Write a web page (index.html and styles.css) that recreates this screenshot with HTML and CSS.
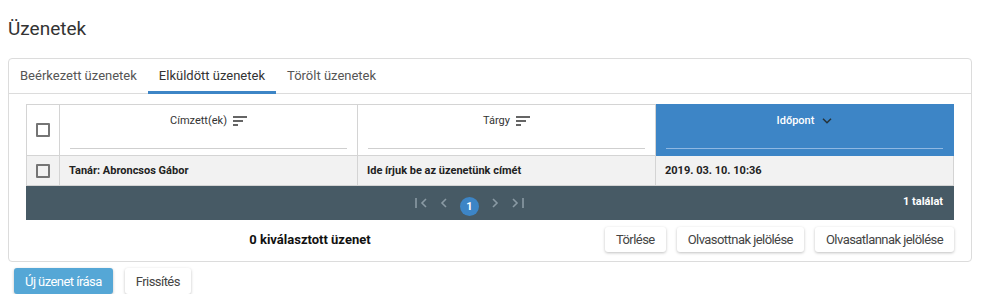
FILE: index.html
```html
<!DOCTYPE html>
<html lang="hu">
<head>
    <meta charset="UTF-8">
    <meta name="viewport" content="width=device-width, initial-scale=1.0">
    <title>Üzenetek</title>
    <link rel="stylesheet" href="styles.css">
</head>
<body>

<h1 class="page-title">Üzenetek</h1>

<div class="card">
    <div class="tabs">
        <div class="tab">Beérkezett üzenetek</div>
        <div class="tab active">Elküldött üzenetek</div>
        <div class="tab">Törölt üzenetek</div>
    </div>

    <div class="card-body">
        <table class="grid">
            <colgroup>
                <col class="col-check">
                <col>
                <col>
                <col>
            </colgroup>
            <thead>
                <tr>
                    <th class="check-cell"><span class="checkbox"></span></th>
                    <th>
                        <div class="col-title">Címzett(ek)
                            <svg class="sort-icon" width="14" height="10" viewBox="0 0 14 10"><path d="M0 1h14M0 5h10M0 9h5" stroke="#333" stroke-width="1.3" fill="none"/></svg>
                        </div>
                        <div class="filter"></div>
                    </th>
                    <th>
                        <div class="col-title">Tárgy
                            <svg class="sort-icon" width="14" height="10" viewBox="0 0 14 10"><path d="M0 1h14M0 5h10M0 9h5" stroke="#333" stroke-width="1.3" fill="none"/></svg>
                        </div>
                        <div class="filter"></div>
                    </th>
                    <th class="sorted">
                        <div class="col-title">Időpont
                            <svg class="sort-arrow" width="10" height="6" viewBox="0 0 10 6"><path d="M1 0.8l4 4 4-4" stroke="#263238" stroke-width="1.5" fill="none"/></svg>
                        </div>
                        <div class="filter"></div>
                    </th>
                </tr>
            </thead>
            <tbody>
                <tr>
                    <td class="check-cell"><span class="checkbox"></span></td>
                    <td>Tanár: Abroncsos Gábor</td>
                    <td>Ide írjuk be az üzenetünk címét</td>
                    <td>2019. 03. 10. 10:36</td>
                </tr>
            </tbody>
        </table>

        <div class="pager">
            <div class="pager-nav">
                <svg width="12" height="10" viewBox="0 0 12 10"><path d="M1 0v10M11 1L7 5l4 4" stroke="#8a9aa4" stroke-width="1.6" fill="none"/></svg>
                <svg width="7" height="10" viewBox="0 0 7 10"><path d="M6 1L2 5l4 4" stroke="#8a9aa4" stroke-width="1.6" fill="none"/></svg>
                <span class="page-current">1</span>
                <svg width="7" height="10" viewBox="0 0 7 10"><path d="M1 1l4 4-4 4" stroke="#8a9aa4" stroke-width="1.6" fill="none"/></svg>
                <svg width="12" height="10" viewBox="0 0 12 10"><path d="M1 1l4 4-4 4M11 0v10" stroke="#8a9aa4" stroke-width="1.6" fill="none"/></svg>
            </div>
            <div class="pager-count">1 találat</div>
        </div>

        <div class="actions">
            <div class="selected-count">0 kiválasztott üzenet</div>
            <button class="btn">Törlése</button>
            <button class="btn">Olvasottnak jelölése</button>
            <button class="btn">Olvasatlannak jelölése</button>
        </div>
    </div>
</div>

<div class="footer-buttons">
    <button class="btn btn-primary">Új üzenet írása</button>
    <button class="btn">Frissítés</button>
</div>

</body>
</html>
```

FILE: styles.css
```css
body {
    margin: 0;
    padding: 0 8px;
    font-family: Roboto, "Noto Sans", Arial, sans-serif;
    color: #333;
    background-color: #fff;
}
.page-title {
    margin: 17px 0;
    font-size: 19px;
    line-height: 24px;
    font-weight: 400;
    color: #333;
}
.card {
    border: 1px solid #dcdcdc;
    border-radius: 4px;
    margin-right: 2px;
}
.tabs {
    display: flex;
    border-bottom: 1px solid #dcdcdc;
}
.tab {
    height: 30px;
    line-height: 30px;
    padding: 2px 11px 0;
    margin-bottom: -1px;
    border-bottom: 3px solid transparent;
    font-size: 13px;
    color: #555;
}
.tab.active {
    color: #333;
    border-bottom-color: #3d85c6;
}
.card-body {
    padding: 10px 17px 9px;
}
.grid {
    width: 100%;
    border-collapse: collapse;
    table-layout: fixed;
    font-size: 11px;
}
.col-check {
    width: 33px;
}
.grid th,
.grid td {
    border: 1px solid #d4d4d4;
}
.grid th {
    padding: 9px 10px 6px;
    font-weight: 400;
    color: #333;
}
.grid th.check-cell,
.grid td.check-cell {
    padding: 0;
    text-align: center;
    vertical-align: middle;
}
.col-title {
    height: 14px;
    line-height: 14px;
    display: flex;
    justify-content: center;
    align-items: center;
    gap: 6px;
}
.filter {
    height: 20px;
    border-bottom: 1px solid #cfcfcf;
}
.grid th.sorted {
    background-color: #3d85c6;
    border-color: #3d85c6;
    color: #fff;
    font-weight: 500;
}
.grid th.sorted .col-title {
    gap: 8px;
}
.grid th.sorted .filter {
    border-bottom-color: #8fb8e2;
}
.grid td {
    height: 29px;
    padding: 0 9px;
    background-color: #f2f2f2;
    font-weight: 700;
    color: #222;
}
.checkbox {
    display: inline-block;
    width: 10px;
    height: 10px;
    border: 2px solid #757575;
    border-radius: 1px;
    vertical-align: middle;
}
.pager {
    display: flex;
    align-items: center;
    height: 34px;
    background-color: #475a65;
}
.pager-nav {
    flex: 1;
    display: flex;
    justify-content: center;
    align-items: center;
    gap: 13px;
    padding-left: 10px;
}
.page-current {
    width: 19px;
    height: 19px;
    line-height: 19px;
    margin-top: 6px;
    border-radius: 50%;
    background-color: #3d85c6;
    color: #fff;
    font-size: 11px;
    font-weight: 700;
    text-align: center;
}
.pager-count {
    padding: 0 11px 4px 0;
    font-size: 11px;
    font-weight: 700;
    color: #fff;
}
.actions {
    display: flex;
    align-items: center;
    gap: 11px;
    margin-top: 7px;
}
.selected-count {
    flex: 1;
    text-align: center;
    font-size: 13px;
    font-weight: 700;
    color: #111;
}
.btn {
    height: 25px;
    padding: 0 11px;
    border: none;
    border-radius: 3px;
    background-color: #fff;
    box-shadow: 0 1px 3px rgba(0, 0, 0, 0.25);
    font-family: Roboto, "Noto Sans", Arial, sans-serif;
    font-size: 13px;
    letter-spacing: -0.55px;
    color: #444;
    cursor: pointer;
}
.footer-buttons {
    display: flex;
    gap: 12px;
    margin: 6px 0 0 6px;
}
.footer-buttons .btn {
    height: 26px;
}
.btn-primary {
    background-color: #55a7d6;
    color: #fff;
}
```
